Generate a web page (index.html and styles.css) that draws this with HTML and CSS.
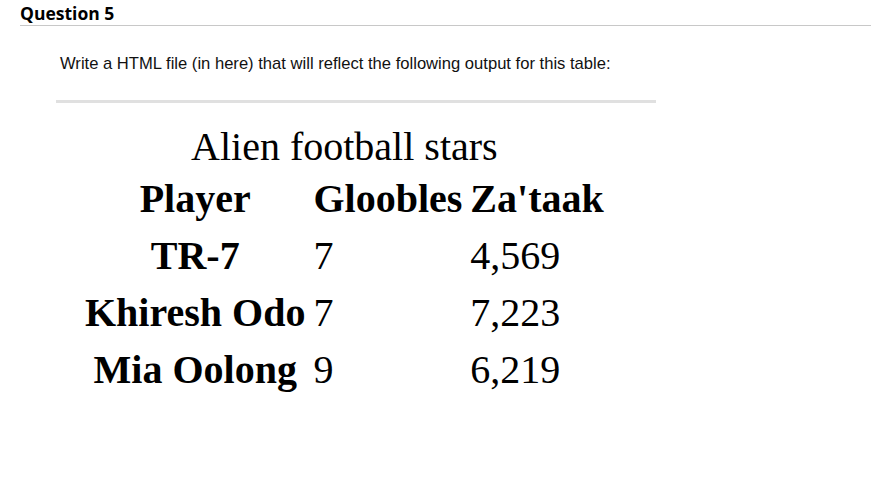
FILE: index.html
```html
<!DOCTYPE html>
<html>
<head>
<meta charset="utf-8">
<link rel="stylesheet" href="styles.css">
</head>
<body>
<div class="question">
  <h2 class="q-title">Question 5</h2>
  <div class="q-body">
    <p class="prompt">Write a HTML file (in here) that will reflect the following output for this table:</p>
    <hr class="rule">
    <table class="aliens">
      <caption>Alien football stars</caption>
      <thead>
        <tr><th>Player</th><th>Gloobles</th><th>Za'taak</th></tr>
      </thead>
      <tbody>
        <tr><th>TR-7</th><td>7</td><td>4,569</td></tr>
        <tr><th>Khiresh Odo</th><td>7</td><td>7,223</td></tr>
        <tr><th>Mia Oolong</th><td>9</td><td>6,219</td></tr>
      </tbody>
    </table>
  </div>
</div>
</body>
</html>
```
FILE: styles.css
```css
html, body {
  margin: 0;
  padding: 0;
  background: #fff;
}
.question {
  padding: 0 0 0 20px;
}
.q-title {
  margin: 0;
  padding-top: 2px;
  font-family: "Open Sans", sans-serif;
  font-weight: 700;
  font-size: 17.5px;
  line-height: 23px;
  color: #000;
  border-bottom: 1px solid #c8c8c8;
}
.q-body {
  padding-left: 36px;
}
.prompt {
  margin: 28px 0 0 4px;
  font-family: "Liberation Sans", Arial, sans-serif;
  font-size: 16.6px;
  line-height: 20px;
  color: #111;
}
.rule {
  width: 600px;
  margin: 26px 0 0 0;
  border: 0;
  height: 3px;
  background: #e0e0e0;
}
.aliens {
  margin: 22px 0 0 24px;
  font-family: "Liberation Serif", "Times New Roman", serif;
  font-size: 40px;
  color: #000;
  border-spacing: 2px;
}
.aliens caption {
  line-height: 44px;
}
.aliens th, .aliens td {
  padding: 1px 3px;
  line-height: 53px;
}
.aliens td {
  text-align: left;
}
```
